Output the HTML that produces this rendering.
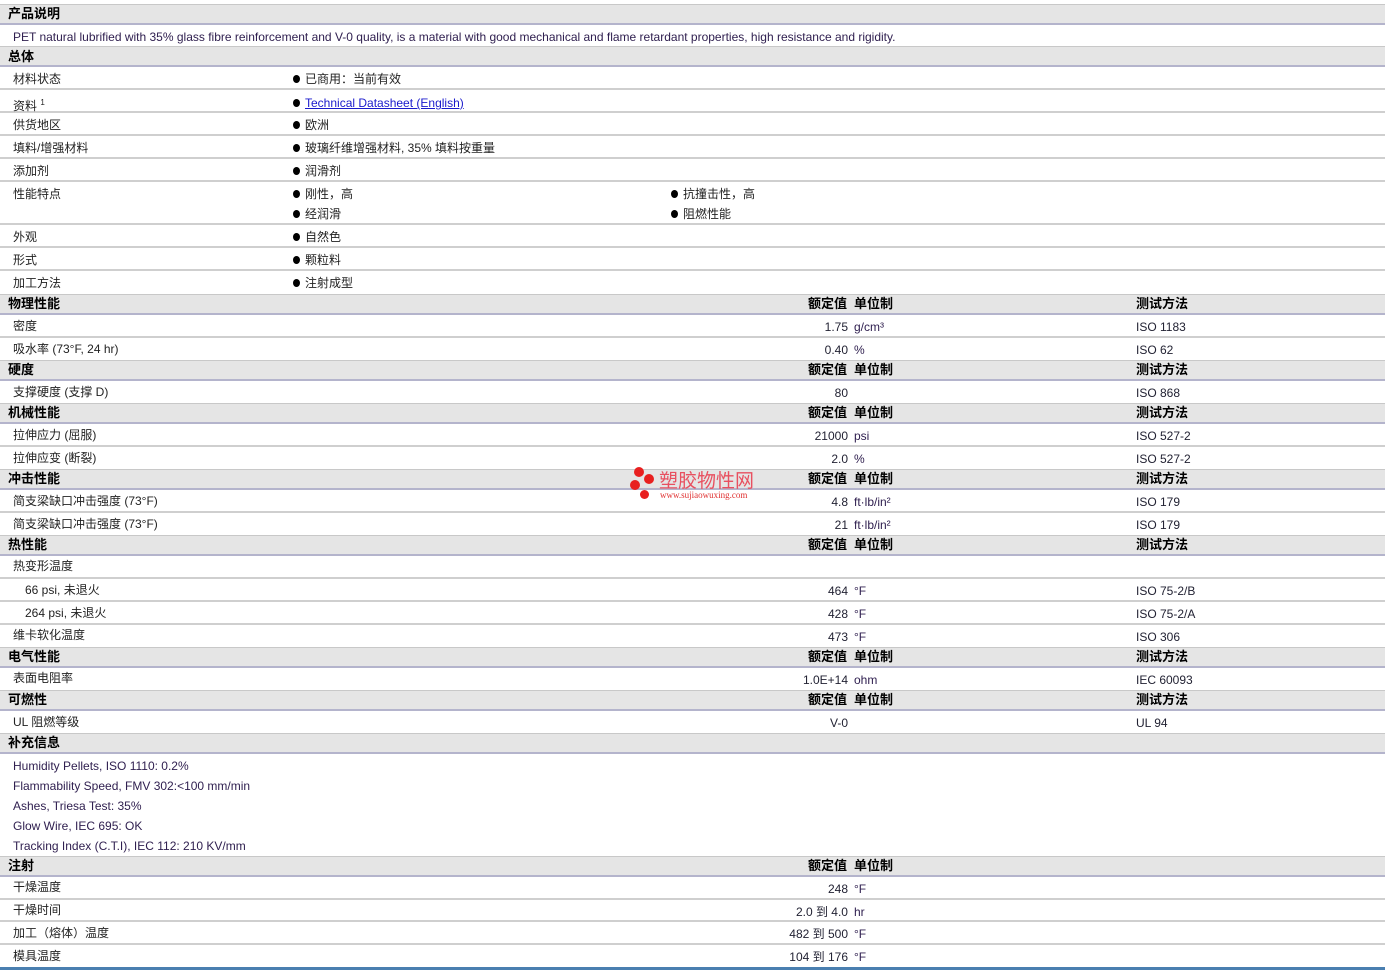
<!DOCTYPE html>
<html><head><meta charset="utf-8"><style>
*{margin:0;padding:0;box-sizing:border-box}
body{width:1385px;height:970px;background:#fff;position:relative;overflow:hidden;font-family:"Liberation Sans","Noto Sans CJK SC",sans-serif;font-size:12px;color:#222}
.h{position:absolute;left:0;width:1385px;background:#e5e5e5;border-top:1px solid #c8c8c8;border-bottom:2px solid #b4b4cc;font-weight:bold;font-size:13px;color:#000}
.r{position:absolute;left:0;width:1385px;border-bottom:2px solid #cfcfcf}
.t{position:absolute;white-space:nowrap;line-height:14px}
.v{position:absolute;white-space:nowrap;line-height:14px;right:537px;text-align:right;color:#223}
.u{left:854px;color:#302050}
.m{left:1136px;color:#223}
.b::before{content:"";position:absolute;left:-12px;top:3px;width:7px;height:8px;border-radius:50%;background:#000}
a{color:#1a1acc;text-decoration:underline}
.e{color:#302050}
.hb{position:absolute;white-space:nowrap;line-height:14px;font-weight:bold;font-size:13px;color:#000}
.hv{right:538px}
.hu{left:854px}
</style></head><body>
<div class="h" style="top:4px;height:21px"></div>
<div class="h" style="top:46px;height:21px"></div>
<div class="h" style="top:294px;height:21px"></div>
<div class="h" style="top:360px;height:21px"></div>
<div class="h" style="top:403px;height:21px"></div>
<div class="h" style="top:469px;height:21px"></div>
<div class="h" style="top:535px;height:21px"></div>
<div class="h" style="top:647px;height:21px"></div>
<div class="h" style="top:690px;height:21px"></div>
<div class="h" style="top:733px;height:21px"></div>
<div class="h" style="top:856px;height:21px"></div>
<div class="r" style="top:88px;height:2px"></div>
<div class="r" style="top:111px;height:2px"></div>
<div class="r" style="top:134px;height:2px"></div>
<div class="r" style="top:157px;height:2px"></div>
<div class="r" style="top:180px;height:2px"></div>
<div class="r" style="top:223px;height:2px"></div>
<div class="r" style="top:246px;height:2px"></div>
<div class="r" style="top:269px;height:2px"></div>
<div class="r" style="top:336px;height:2px"></div>
<div class="r" style="top:445px;height:2px"></div>
<div class="r" style="top:511px;height:2px"></div>
<div class="r" style="top:577px;height:2px"></div>
<div class="r" style="top:600px;height:2px"></div>
<div class="r" style="top:623px;height:2px"></div>
<div class="r" style="top:898px;height:2px"></div>
<div class="r" style="top:920px;height:2px"></div>
<div class="r" style="top:943px;height:2px"></div>
<div style="position:absolute;left:0;top:967px;width:1385px;height:3px;background:#4a7fb0"></div>

<div class="hb" style="left:8px;top:7px">产品说明</div>
<div class="t e" style="left:13px;top:30px">PET natural lubrified with 35% glass fibre reinforcement and V-0 quality, is a material with good mechanical and flame retardant properties, high resistance and rigidity.</div>
<div class="hb" style="left:8px;top:50px">总体</div>

<div class="t" style="left:13px;top:72px">材料状态</div><div class="t b" style="left:305px;top:72px">已商用：当前有效</div>
<div class="t" style="left:13px;top:96px">资料 <sup style="font-size:8px">1</sup></div><div class="t b" style="left:305px;top:96px"><a>Technical Datasheet (English)</a></div>
<div class="t" style="left:13px;top:118px">供货地区</div><div class="t b" style="left:305px;top:118px">欧洲</div>
<div class="t" style="left:13px;top:141px">填料/增强材料</div><div class="t b" style="left:305px;top:141px">玻璃纤维增强材料, 35% 填料按重量</div>
<div class="t" style="left:13px;top:164px">添加剂</div><div class="t b" style="left:305px;top:164px">润滑剂</div>
<div class="t" style="left:13px;top:187px">性能特点</div><div class="t b" style="left:305px;top:187px">刚性，高</div><div class="t b" style="left:683px;top:187px">抗撞击性，高</div>
<div class="t b" style="left:305px;top:207px">经润滑</div><div class="t b" style="left:683px;top:207px">阻燃性能</div>
<div class="t" style="left:13px;top:230px">外观</div><div class="t b" style="left:305px;top:230px">自然色</div>
<div class="t" style="left:13px;top:253px">形式</div><div class="t b" style="left:305px;top:253px">颗粒料</div>
<div class="t" style="left:13px;top:276px">加工方法</div><div class="t b" style="left:305px;top:276px">注射成型</div>

<div class="hb" style="left:8px;top:297px">物理性能</div>
<div class="hb hv" style="top:297px">额定值</div><div class="hb hu" style="top:297px">单位制</div><div class="hb" style="left:1136px;top:297px">测试方法</div>
<div class="t" style="left:13px;top:319px">密度</div><div class="v" style="top:320px">1.75</div><div class="t u" style="top:320px">g/cm³</div><div class="t m" style="top:320px">ISO 1183</div>
<div class="t" style="left:13px;top:342px">吸水率 (73°F, 24 hr)</div><div class="v" style="top:343px">0.40</div><div class="t u" style="top:343px">%</div><div class="t m" style="top:343px">ISO 62</div>

<div class="hb" style="left:8px;top:363px">硬度</div>
<div class="hb hv" style="top:363px">额定值</div><div class="hb hu" style="top:363px">单位制</div><div class="hb" style="left:1136px;top:363px">测试方法</div>
<div class="t" style="left:13px;top:385px">支撑硬度 (支撑 D)</div><div class="v" style="top:386px">80</div><div class="t m" style="top:386px">ISO 868</div>

<div class="hb" style="left:8px;top:406px">机械性能</div>
<div class="hb hv" style="top:406px">额定值</div><div class="hb hu" style="top:406px">单位制</div><div class="hb" style="left:1136px;top:406px">测试方法</div>
<div class="t" style="left:13px;top:428px">拉伸应力 (屈服)</div><div class="v" style="top:429px">21000</div><div class="t u" style="top:429px">psi</div><div class="t m" style="top:429px">ISO 527-2</div>
<div class="t" style="left:13px;top:451px">拉伸应变 (断裂)</div><div class="v" style="top:452px">2.0</div><div class="t u" style="top:452px">%</div><div class="t m" style="top:452px">ISO 527-2</div>

<div class="hb" style="left:8px;top:472px">冲击性能</div>
<div class="hb hv" style="top:472px">额定值</div><div class="hb hu" style="top:472px">单位制</div><div class="hb" style="left:1136px;top:472px">测试方法</div>
<div class="t" style="left:13px;top:494px">简支梁缺口冲击强度 (73°F)</div><div class="v" style="top:495px">4.8</div><div class="t u" style="top:495px">ft·lb/in²</div><div class="t m" style="top:495px">ISO 179</div>
<div class="t" style="left:13px;top:517px">简支梁缺口冲击强度 (73°F)</div><div class="v" style="top:518px">21</div><div class="t u" style="top:518px">ft·lb/in²</div><div class="t m" style="top:518px">ISO 179</div>

<div style="position:absolute;left:634px;top:467px;width:10px;height:10px;border-radius:50%;background:#e82020"></div>
<div style="position:absolute;left:644px;top:474px;width:10px;height:10px;border-radius:50%;background:#e82020"></div>
<div style="position:absolute;left:630px;top:480px;width:10px;height:10px;border-radius:50%;background:#e82020"></div>
<div style="position:absolute;left:640px;top:490px;width:9px;height:9px;border-radius:50%;background:#e82020"></div>
<div class="t" style="left:659px;top:472px;font-size:19px;line-height:20px;color:#e85060">塑胶物性网</div>
<div class="t" style="left:660px;top:491px;font-size:9px;line-height:9px;color:#e03030;font-family:'Liberation Serif',serif">www.sujiaowuxing.com</div>

<div class="hb" style="left:8px;top:538px">热性能</div>
<div class="hb hv" style="top:538px">额定值</div><div class="hb hu" style="top:538px">单位制</div><div class="hb" style="left:1136px;top:538px">测试方法</div>
<div class="t" style="left:13px;top:559px">热变形温度</div>
<div class="t" style="left:25px;top:583px">66 psi, 未退火</div><div class="v" style="top:584px">464</div><div class="t u" style="top:584px">°F</div><div class="t m" style="top:584px">ISO 75-2/B</div>
<div class="t" style="left:25px;top:606px">264 psi, 未退火</div><div class="v" style="top:607px">428</div><div class="t u" style="top:607px">°F</div><div class="t m" style="top:607px">ISO 75-2/A</div>
<div class="t" style="left:13px;top:628px">维卡软化温度</div><div class="v" style="top:630px">473</div><div class="t u" style="top:630px">°F</div><div class="t m" style="top:630px">ISO 306</div>

<div class="hb" style="left:8px;top:650px">电气性能</div>
<div class="hb hv" style="top:650px">额定值</div><div class="hb hu" style="top:650px">单位制</div><div class="hb" style="left:1136px;top:650px">测试方法</div>
<div class="t" style="left:13px;top:671px">表面电阻率</div><div class="v" style="top:673px">1.0E+14</div><div class="t u" style="top:673px">ohm</div><div class="t m" style="top:673px">IEC 60093</div>

<div class="hb" style="left:8px;top:693px">可燃性</div>
<div class="hb hv" style="top:693px">额定值</div><div class="hb hu" style="top:693px">单位制</div><div class="hb" style="left:1136px;top:693px">测试方法</div>
<div class="t" style="left:13px;top:715px">UL 阻燃等级</div><div class="v" style="top:716px">V-0</div><div class="t m" style="top:716px">UL 94</div>

<div class="hb" style="left:8px;top:736px">补充信息</div>
<div class="t e" style="left:13px;top:759px">Humidity Pellets, ISO 1110: 0.2%</div>
<div class="t e" style="left:13px;top:779px">Flammability Speed, FMV 302:&lt;100 mm/min</div>
<div class="t e" style="left:13px;top:799px">Ashes, Triesa Test: 35%</div>
<div class="t e" style="left:13px;top:819px">Glow Wire, IEC 695: OK</div>
<div class="t e" style="left:13px;top:839px">Tracking Index (C.T.I), IEC 112: 210 KV/mm</div>

<div class="hb" style="left:8px;top:859px">注射</div>
<div class="hb hv" style="top:859px">额定值</div><div class="hb hu" style="top:859px">单位制</div>
<div class="t" style="left:13px;top:880px">干燥温度</div><div class="v" style="top:882px">248</div><div class="t u" style="top:882px">°F</div>
<div class="t" style="left:13px;top:903px">干燥时间</div><div class="v" style="top:905px">2.0 到 4.0</div><div class="t u" style="top:905px">hr</div>
<div class="t" style="left:13px;top:926px">加工（熔体）温度</div><div class="v" style="top:927px">482 到 500</div><div class="t u" style="top:927px">°F</div>
<div class="t" style="left:13px;top:949px">模具温度</div><div class="v" style="top:950px">104 到 176</div><div class="t u" style="top:950px">°F</div>
</body></html>
